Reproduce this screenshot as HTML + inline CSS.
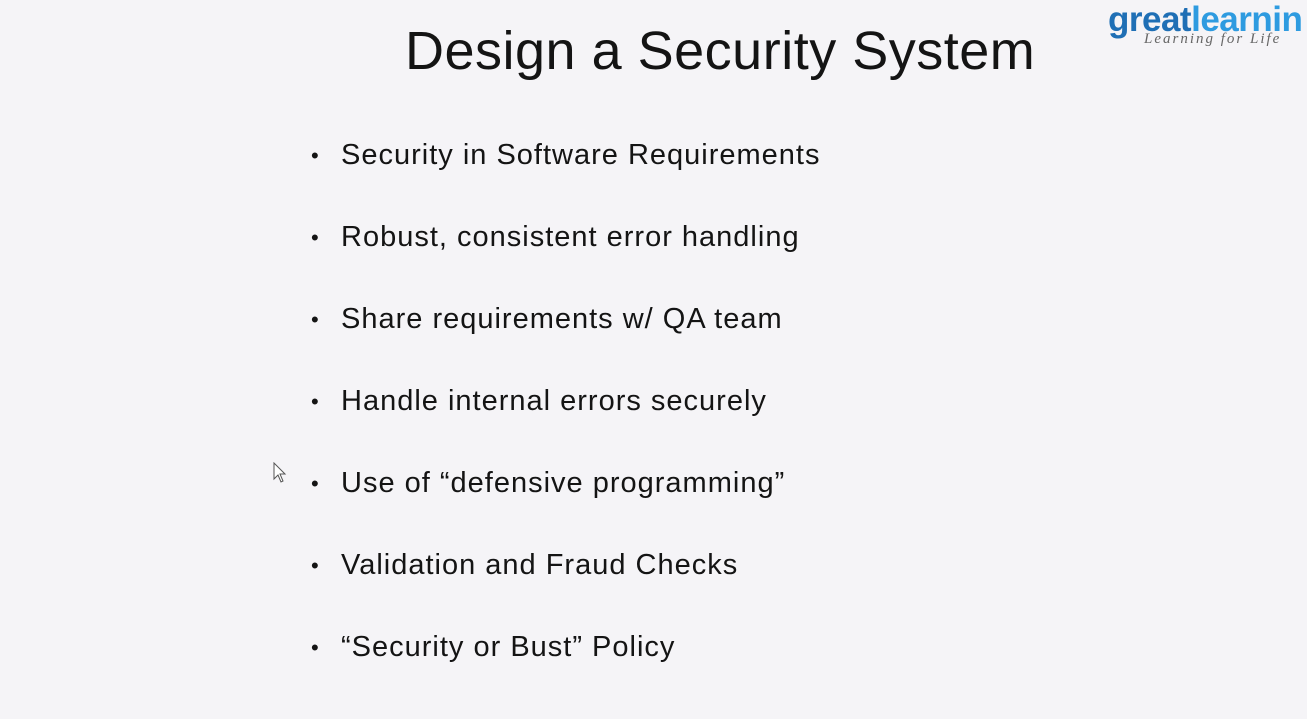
<!DOCTYPE html>
<html><head><style>
body{margin:0;width:1307px;height:719px;background:#f5f4f7;position:relative;overflow:hidden;font-family:"Liberation Sans",sans-serif;color:#141414}
.t{position:absolute;left:405px;top:20px;font-size:54px;white-space:nowrap;letter-spacing:0.5px}
.b{position:absolute;left:341px;font-size:29px;white-space:nowrap;letter-spacing:1px}
.b:before{content:"•";position:absolute;left:-30px;font-size:22px;top:4px}
.logo{position:absolute;left:1108px;top:0px;font-weight:bold;font-size:35px;letter-spacing:-0.5px;white-space:nowrap}
.sub{position:absolute;left:1144px;top:31px;font-family:"Liberation Serif",serif;font-style:italic;font-size:15px;color:#666;letter-spacing:2px;white-space:nowrap}
</style></head><body>
<div class="t">Design a Security System</div>
<div class="logo"><span style="color:#1f6fb5">great</span><span style="color:#2e9be0">learnin</span></div>
<div class="sub">Learning for Life</div>
<div class="b" style="top:139px">Security in Software Requirements</div>
<div class="b" style="top:221px">Robust, consistent error handling</div>
<div class="b" style="top:303px">Share requirements w/ QA team</div>
<div class="b" style="top:385px">Handle internal errors securely</div>
<div class="b" style="top:467px">Use of “defensive programming”</div>
<div class="b" style="top:549px">Validation and Fraud Checks</div>
<div class="b" style="top:631px">“Security or Bust” Policy</div>
<svg style="position:absolute;left:273px;top:462px" width="14" height="22" viewBox="0 0 14 22"><path d="M1 1 L1 17 L5 13 L8 20 L10 19 L7 12 L12 12 Z" fill="#fff" stroke="#555" stroke-width="1"/></svg>
</body></html>
